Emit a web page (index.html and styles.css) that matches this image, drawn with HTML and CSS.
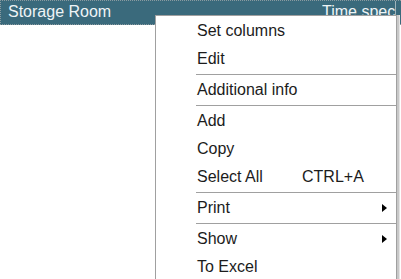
FILE: index.html
```html
<!doctype html>
<html lang="en">
    <head>
        <meta charset="UTF-8" />
        <title>Storage Room</title>
        <link rel="stylesheet" href="styles.css">
    </head>
    <body>
        <div class="grid">
            <div class="header-row">
                <div class="cell cell-name">Storage Room</div>
                <div class="cell cell-time">Time specification</div>
                <div class="cell cell-rest"></div>
            </div>
        </div>

        <!-- Context menu -->
        <div class="menu">
            <div class="item">Set columns</div>
            <div class="item">Edit</div>
            <div class="sep"></div>
            <div class="item">Additional info</div>
            <div class="sep"></div>
            <div class="item">Add</div>
            <div class="item">Copy</div>
            <div class="item">Select All <span class="shortcut">CTRL+A</span></div>
            <div class="sep"></div>
            <div class="item">Print <span class="arrow"></span></div>
            <div class="sep"></div>
            <div class="item">Show <span class="arrow"></span></div>
            <div class="item">To Excel</div>
        </div>
    </body>
</html>
```

FILE: styles.css
```css
body {
    margin: 0;
    background: #fff;
    font-family: "Liberation Sans", Arial, sans-serif;
    font-size: 16px;
    overflow: hidden;
}

.grid {
    width: 401px;
}

.header-row {
    display: flex;
    height: 23px;
    background: #3a6a7c;
    border: 1px dotted #8a9aa0;
    border-right: none;
    color: #eef4f6;
    line-height: 22px;
    overflow: hidden;
    white-space: nowrap;
}

.cell-name {
    width: 314px;
    padding-left: 7px;
}

.cell-time {
    width: 73px;
    overflow: hidden;
    border-right: 1px solid #9fb3bb;
}

.cell-rest {
    flex: 1;
}

.menu {
    position: absolute;
    left: 155px;
    top: 15px;
    width: 240px;
    height: 263px;
    padding-top: 1px;
    background: #fff;
    border: 1px solid #a0a0a0;
    border-bottom: none;
    box-shadow: 2px 0 0 #c8c8c8, 3px 0 0 #e4e4e4;
    color: #1c1c1c;
    overflow: hidden;
}

.item {
    position: relative;
    height: 28px;
    line-height: 28px;
    padding-left: 41px;
    white-space: nowrap;
}

.shortcut {
    position: absolute;
    left: 146px;
}

.arrow {
    position: absolute;
    right: 9px;
    top: 10px;
    width: 0;
    height: 0;
    border-top: 4px solid transparent;
    border-bottom: 4px solid transparent;
    border-left: 5px solid #000;
}

.sep {
    height: 1px;
    margin: 1px 0 1px 40px;
    background: #a0a0a0;
}
```
